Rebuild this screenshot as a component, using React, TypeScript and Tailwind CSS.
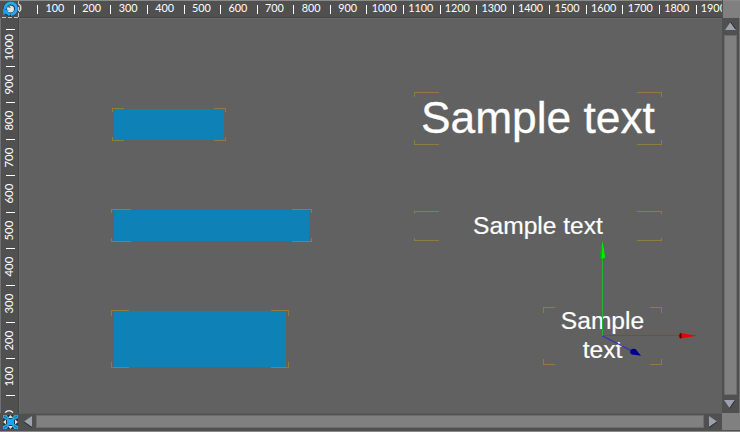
import React from "react";

const columns = ["0", "100", "200", "300", "400", "500", "600", "700", "800", "900", "1000", "1100", "1200", "1300", "1400", "1500", "1600", "1700", "1800", "1900"];
const rows = ["1000", "900", "800", "700", "600", "500", "400", "300", "200", "100", "0"];

function HorizontalRuler() {
  return (
    <div className="flex h-[18px] overflow-hidden border-t border-[#8a8a8a] bg-[#505050] shadow-[inset_0_-1px_0_#454545]">
      <div className="-ml-[18.4px] flex h-4 shrink-0">
        {columns.map((n) => (
          <div key={n} className="flex w-[36.58px] shrink-0 items-start">
            <span className="mt-1 h-[9px] w-px shrink-0 bg-white" />
            <span className="flex-1 pr-[2px] text-center text-[10.8px] leading-[13px]">{n}</span>
          </div>
        ))}
      </div>
    </div>
  );
}

function VerticalRuler() {
  return (
    <div className="flex flex-col overflow-hidden border-l border-[#707070] bg-[#505050] pt-[11px] shadow-[inset_-1px_0_0_#454545]">
      {rows.map((n) => (
        <div key={n} className="flex h-[36.58px] shrink-0 flex-col">
          <span className="ml-[5px] h-px w-[9px] shrink-0 bg-white" />
          <span className="ml-[1px] flex-1 rotate-180 self-start pt-px text-center text-[11.4px] leading-[14px] [writing-mode:vertical-rl]">{n}</span>
        </div>
      ))}
    </div>
  );
}

function Brackets({ className, corner, children }: { className: string; corner: string; children?: React.ReactNode }) {
  return (
    <div className={`absolute ${className}`}>
      {children}
      <i className={`absolute left-0 top-0 border-l border-t border-[#927b3f] ${corner}`} />
      <i className={`absolute right-0 top-0 border-r border-t border-[#927b3f] ${corner}`} />
      <i className={`absolute bottom-0 left-0 border-b border-l border-[#927b3f] ${corner}`} />
      <i className={`absolute bottom-0 right-0 border-b border-r border-[#927b3f] ${corner}`} />
    </div>
  );
}

function Gizmo() {
  return (
    <svg className="absolute left-[571px] top-[221px]" width="110" height="125" viewBox="590 239 110 125">
      <path d="M602.5 336V256" stroke="#25b52d" />
      <path d="M603 335.5H680" stroke="#a83434" />
      <path d="M602.5 336L632 351" stroke="#3030c0" strokeWidth="1.2" />
      <path d="M602.5 241L599.8 257.5Q602.5 259.2 605.2 257.5Z" fill="#00ed00" />
      <path d="M602 243L599.8 257.5L601.5 258Z" fill="#00a000" />
      <path d="M697 335.7L680 333Q678.5 335.7 680 338.5Z" fill="#ed0000" />
      <path d="M680 333Q678.5 335.7 680 338.5L681.5 338V333.4Z" fill="#650000" />
      <path d="M641 355.8L635.5 349Q630 347.8 630 352.5Q631 355.2 634 354.7Z" fill="#000083" />
    </svg>
  );
}

function Canvas() {
  return (
    <main className="relative overflow-hidden bg-[#616161] font-['Liberation_Sans',sans-serif] shadow-[inset_1px_1px_0_#696969]">
      <Brackets className="left-[93px] top-[90px] h-[33px] w-[114px]" corner="h-[4px] w-[12px]">
        <div className="ml-[2px] mt-px h-[31px] w-[110px] bg-[#0e81b6]" />
      </Brackets>
      <Brackets className="left-[92px] top-[191px] h-[33px] w-[201px]" corner="h-[4px] w-[20px]">
        <div className="ml-[3px] mt-px h-[31px] w-[195px] bg-[#0e81b6]" />
      </Brackets>
      <Brackets className="left-[92px] top-[292px] h-[58px] w-[178px]" corner="h-[6px] w-[18px]">
        <div className="ml-[3px] mt-px h-[56px] w-[172px] bg-[#0e81b6]" />
      </Brackets>
      <Brackets className="left-[395px] top-[74px] h-[53px] w-[248px]" corner="h-[5px] w-[25px]">
        <div className="whitespace-nowrap pl-[7px] text-[44.3px] leading-[51px] [-webkit-text-stroke:0.3px_white]">Sample text</div>
      </Brackets>
      <Brackets className="left-[395px] top-[193px] h-[30px] w-[248px]" corner="h-[3px] w-[25px]">
        <div className="whitespace-nowrap text-center text-[24.6px] leading-[29px] [-webkit-text-stroke:0.2px_white]">Sample text</div>
      </Brackets>
      <Brackets className="left-[524px] top-[289px] h-[58px] w-[119px]" corner="h-[6px] w-[12px]">
        <div className="text-center text-[24.6px] leading-[28.5px] [-webkit-text-stroke:0.2px_white]">Sample<br />text</div>
      </Brackets>
      <Gizmo />
    </main>
  );
}

function Origin() {
  return (
    <svg width="19" height="18" viewBox="0 0 19 18">
      <path d="M0 0H19V18H0Z" fill="#505050" />
      <path d="M0 .5H19" stroke="#8a8a8a" />
      <path d="M2 17.5H19M18.5 1V18" stroke="#c4c4c4" strokeDasharray="4 2" />
      <circle cx="10.5" cy="9" r="7.5" fill="#172b3b" />
      <path d="M5 9A5.7 5.7 0 1 1 11 14.4" fill="none" stroke="#29a8ec" strokeWidth="3" />
      <circle cx="10.5" cy="9" r="3.5" fill="#e4e4e4" />
      <path d="M7.5 7Q8 5.5 10 5.2L10.5 8Q9 8 7.5 7Z" fill="#65717a" />
      <path d="M3 9L9 10L7.5 11.5L11.5 14L9 16L5.5 13.5L3.5 15Z" fill="#20a4ed" />
    </svg>
  );
}

function FitIcon() {
  return (
    <svg width="19" height="19" viewBox="0 0 19 19">
      <path d="M0 0H19V19H0Z" fill="#505050" />
      <path d="M3 2H18V16H3Z" fill="#293640" />
      <path d="M10.5 2L13 5H8ZM10.5 16L13 13H8ZM3 9L6 6.5V11.5ZM18 9L15 6.5V11.5Z" fill="#dedede" />
      <path d="M7 6H14V12H7Z" fill="#20a4ee" />
      <path d="M3 2H7L9 6L7 7L3 5ZM18 2H14L12 6L14 7L18 5ZM3 16H7L9 12L7 11L3 13ZM18 16H14L12 12L14 11L18 13Z" fill="#23a8ee" />
      <path d="M4 3L7 5M17 3L14 5M4 15L7 13M17 15L14 13" stroke="#19394c" strokeWidth=".6" />
      <path d="M0 18.5H19" stroke="#8a8a8a" />
    </svg>
  );
}

function VerticalScroll() {
  return (
    <div className="flex flex-col items-center border-r border-[#707070] bg-[#505050]">
      <svg className="shrink-0" width="17" height="17" viewBox="0 0 17 17"><path d="M8.5 4L14 12H3Z" fill="#9ba2ad" /><path d="M8.5 4L13.5 11" stroke="#262d36" /></svg>
      <div className="h-[360px] w-[13px] border border-[#6c6c6c] bg-[#808080]" />
      <svg className="shrink-0" width="17" height="18" viewBox="0 0 17 18"><path d="M2 5H13L7.5 13Z" fill="#9ba2ad" /><path d="M13 5.5L7.5 13.5" stroke="#262d36" /></svg>
    </div>
  );
}

function HorizontalScroll() {
  return (
    <div className="flex border-b border-[#8a8a8a] bg-[#505050] pt-[2px] shadow-[inset_0_1px_0_#5b5b5b]">
      <svg className="shrink-0" width="17" height="14" viewBox="0 0 17 14"><path d="M5 6.5L13 1V12Z" fill="#9ba2ad" /><path d="M5 7L13 12.5" stroke="#262d36" /></svg>
      <div className="h-[13px] w-[668px] border border-[#6c6c6c] bg-[#808080]" />
      <svg className="shrink-0" width="18" height="14" viewBox="0 0 18 14"><path d="M5 1L13 6.5L5 12Z" fill="#9ba2ad" /><path d="M13 7L5 12.5" stroke="#262d36" /></svg>
    </div>
  );
}

export default function App() {
  return (
    <div className="grid h-[432px] w-[740px] grid-cols-[19px_703px_18px] grid-rows-[18px_395px_19px] overflow-hidden bg-[#505050] font-['Lato',sans-serif] text-white">
      <Origin />
      <HorizontalRuler />
      <div className="ml-px border-t border-[#8a8a8a] bg-[#808080]" />
      <VerticalRuler />
      <Canvas />
      <VerticalScroll />
      <FitIcon />
      <HorizontalScroll />
      <div className="border-b border-[#8a8a8a] bg-[#505050] pb-px"><div className="h-full bg-[#808080]" /></div>
    </div>
  );
}
